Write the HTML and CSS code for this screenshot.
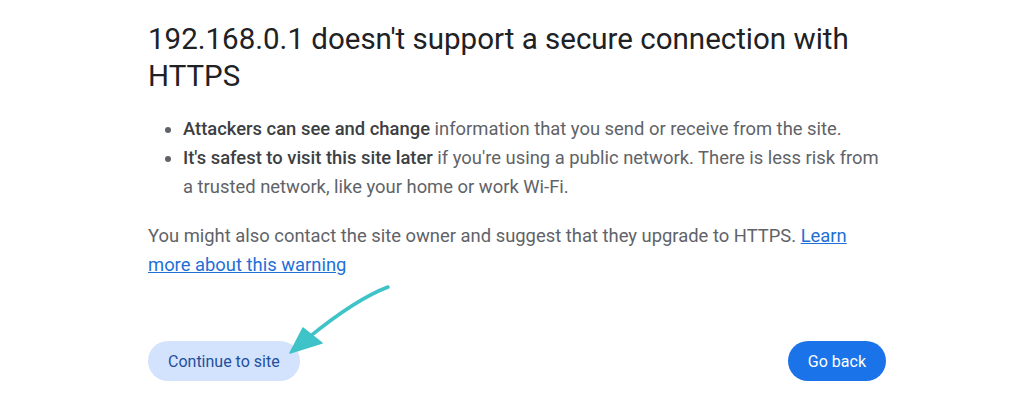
FILE: index.html
```html
<!DOCTYPE html>
<html lang="en">
<head>
    <meta charset="UTF-8">
    <meta name="viewport" content="width=device-width, initial-scale=1.0">
    <title>Privacy error</title>
    <link rel="stylesheet" href="styles.css">
</head>
<body>
    <div class="interstitial">
        <h1 class="main-title">192.168.0.1 doesn't support a secure connection with HTTPS</h1>
        <ul class="details">
            <li><strong>Attackers can see and change</strong> information that you send or receive from the site.</li>
            <li><strong>It's safest to visit this site later</strong> if you're using a public network. There is less risk from a trusted network, like your home or work Wi-Fi.</li>
        </ul>
        <p class="note">You might also contact the site owner and suggest that they upgrade to HTTPS. <a href="#">Learn more about this warning</a></p>
        <div class="actions">
            <div class="continue-wrap">
                <button class="btn btn-secondary">Continue to site</button>
                <!-- annotation arrow pointing at the button -->
                <svg class="pointer" width="110" height="80" viewBox="0 0 110 80">
                    <path d="M100 6 Q68 18 20 57" fill="none" stroke="#3ec3c8" stroke-width="3.5" stroke-linecap="round"/>
                    <path d="M2 72 L15 47 L34 62 Z" fill="#3ec3c8" stroke="#3ec3c8" stroke-width="1.5" stroke-linejoin="round"/>
                </svg>
            </div>
            <button class="btn btn-primary">Go back</button>
        </div>
    </div>
</body>
</html>
```

FILE: styles.css
```css
body {
    margin: 0;
    background: #fff;
    font-family: Roboto, "Liberation Sans", sans-serif;
}

.interstitial {
    width: 738px;
    margin-left: 148px;
    padding-top: 21px;
}

.main-title {
    margin: 0;
    font-size: 29.5px;
    font-weight: 400;
    line-height: 37px;
    color: #202124;
}

.details {
    margin: 19px 0 0;
    padding-left: 35px;
    font-size: 18.4px;
    line-height: 29px;
    color: #5f6368;
}

.details strong {
    font-weight: 500;
    color: #3c4043;
}

.note {
    margin: 20px 0 0;
    font-size: 18.4px;
    line-height: 29px;
    color: #5f6368;
}

.note a {
    color: #1f6fd6;
    text-decoration: underline;
}

.actions {
    display: flex;
    justify-content: space-between;
    align-items: center;
    margin-top: 62px;
}

.continue-wrap {
    position: relative;
}

.pointer {
    position: absolute;
    left: 140px;
    top: -60px;
}

.btn {
    height: 40px;
    padding: 0 20px;
    border: none;
    border-radius: 20px;
    font-family: Roboto, "Liberation Sans", sans-serif;
    font-size: 16px;
    font-weight: 400;
    cursor: pointer;
}

.btn-secondary {
    background: #d3e3fd;
    color: #1f4f9c;
}

.btn-primary {
    background: #1a73e8;
    color: #fff;
}
```
